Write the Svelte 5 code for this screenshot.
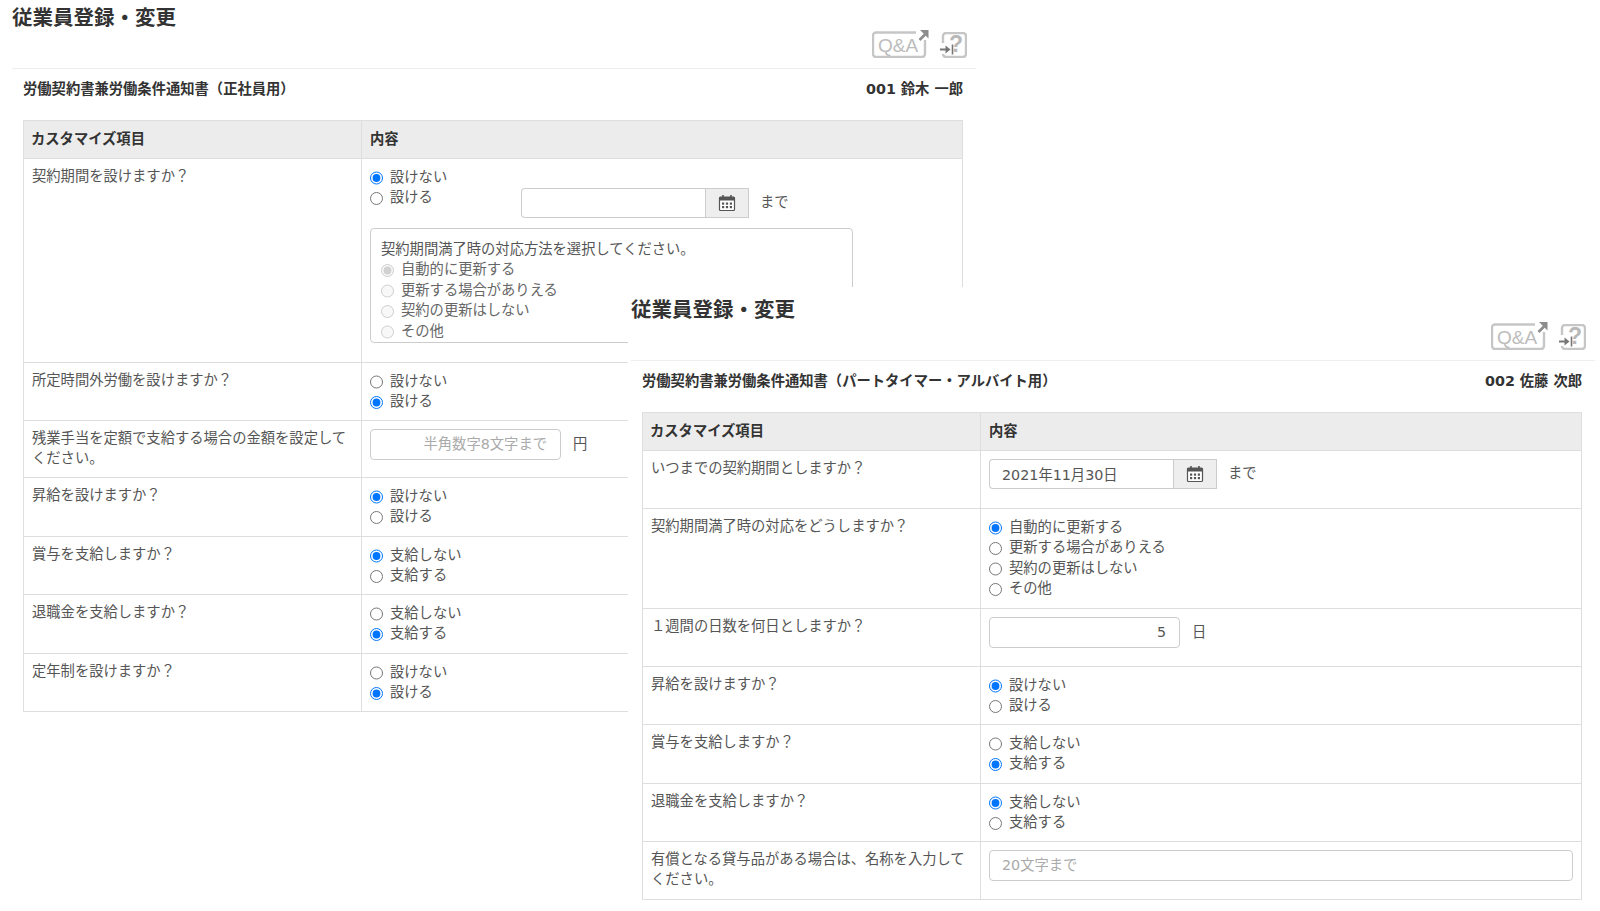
<script>
  const sheetA = {
    docTitle: "労働契約書兼労働条件通知書（正社員用）",
    person: "001 鈴木 一郎",
    rows: [
      { label: "契約期間を設けますか？", h: 204, kind: "term" },
      { label: "所定時間外労働を設けますか？", h: 58, kind: "radio", options: ["設けない", "設ける"], picked: 1 },
      { label: "残業手当を定額で支給する場合の金額を設定してください。", h: 57, kind: "number", placeholder: "半角数字8文字まで", unit: "円" },
      { label: "昇給を設けますか？", h: 59, kind: "radio", options: ["設けない", "設ける"], picked: 0 },
      { label: "賞与を支給しますか？", h: 58, kind: "radio", options: ["支給しない", "支給する"], picked: 0 },
      { label: "退職金を支給しますか？", h: 59, kind: "radio", options: ["支給しない", "支給する"], picked: 1 },
      { label: "定年制を設けますか？", h: 58, kind: "radio", options: ["設けない", "設ける"], picked: 1 }
    ]
  };

  const renewal = ["自動的に更新する", "更新する場合がありえる", "契約の更新はしない", "その他"];

  const sheetB = {
    docTitle: "労働契約書兼労働条件通知書（パートタイマー・アルバイト用）",
    person: "002 佐藤 次郎",
    rows: [
      { label: "いつまでの契約期間としますか？", h: 58, kind: "date", value: "2021年11月30日" },
      { label: "契約期間満了時の対応をどうしますか？", h: 100, kind: "radio", options: renewal, picked: 0 },
      { label: "１週間の日数を何日としますか？", h: 58, kind: "number", value: "5", unit: "日" },
      { label: "昇給を設けますか？", h: 58, kind: "radio", options: ["設けない", "設ける"], picked: 0 },
      { label: "賞与を支給しますか？", h: 59, kind: "radio", options: ["支給しない", "支給する"], picked: 1 },
      { label: "退職金を支給しますか？", h: 58, kind: "radio", options: ["支給しない", "支給する"], picked: 0 },
      { label: "有償となる貸与品がある場合は、名称を入力してください。", h: 58, kind: "text", placeholder: "20文字まで" }
    ]
  };
</script>

{#snippet radios(name, options, picked, disabled = false)}
  {#each options as opt, i}
    <label class="radio" class:off={disabled}>
      <input type="radio" {name} checked={i === picked} {disabled} />
      <span>{opt}</span>
    </label>
  {/each}
{/snippet}

{#snippet datePicker(value)}
  <div class="date">
    <input type="text" class="field date-input" {value} />
    <button class="cal" type="button" aria-label="カレンダー">
      <svg width="18" height="18" viewBox="0 0 18 18">
        <rect x="1.5" y="3" width="15" height="13.5" rx="1" fill="#fff" stroke="#555" stroke-width="1.2" />
        <rect x="1.5" y="3" width="15" height="3.5" fill="#555" />
        <path d="M5 1v3.5M13 1v3.5" stroke="#555" stroke-width="1.6" />
        <g fill="#555">
          <rect x="4" y="8.5" width="2.2" height="2.2" /><rect x="7.9" y="8.5" width="2.2" height="2.2" /><rect x="11.8" y="8.5" width="2.2" height="2.2" />
          <rect x="4" y="12" width="2.2" height="2.2" /><rect x="7.9" y="12" width="2.2" height="2.2" /><rect x="11.8" y="12" width="2.2" height="2.2" />
        </g>
      </svg>
    </button>
    <span class="until">まで</span>
  </div>
{/snippet}

{#snippet sheet(data, id)}
  <div class="head">
    <h2>従業員登録・変更</h2>
    <div class="tools">
      <svg class="qa" width="57" height="29" viewBox="0 0 57 29">
        <path d="M44 3.5H4a3 3 0 0 0-3 3V25a3 3 0 0 0 3 3h46a3 3 0 0 0 3-3V11" fill="none" stroke="#c6c6c6" stroke-width="2.4" />
        <text x="6" y="22.5" class="qa-text">Q&amp;A</text>
        <path d="M47.5 11L53 5.5" stroke="#8c8c8c" stroke-width="2.6" />
        <path d="M48 1h8.5v8.5z" fill="#8c8c8c" />
      </svg>
      <svg class="help" width="27" height="26" viewBox="0 0 27 26">
        <path d="M3 11V4a3 3 0 0 1 3-3h17a3 3 0 0 1 3 3v18a3 3 0 0 1-3 3H6a3 3 0 0 1-3-3" fill="none" stroke="#c6c6c6" stroke-width="2.4" />
        <text x="9" y="20" class="help-text">?</text>
        <path d="M0 17.5h7" stroke="#777" stroke-width="2" />
        <path d="M5.5 13.5l5 4-5 4z" fill="#777" />
        <path d="M12.5 12.5v10" stroke="#777" stroke-width="1.6" />
      </svg>
    </div>
  </div>

  <div class="doc">
    <span>{data.docTitle}</span>
    <span>{data.person}</span>
  </div>

  <table>
    <colgroup><col class="col-label" /><col /></colgroup>
    <thead>
      <tr><th>カスタマイズ項目</th><th>内容</th></tr>
    </thead>
    <tbody>
      {#each data.rows as row, r}
        <tr style="height: {row.h}px">
          <td class="q">{row.label}</td>
          <td class="a">
            {#if row.kind === "radio"}
              {@render radios(`${id}-${r}`, row.options, row.picked)}
            {:else if row.kind === "date"}
              {@render datePicker(row.value)}
            {:else if row.kind === "number"}
              <div class="with-unit">
                <input type="text" class="field num" value={row.value ?? ""} placeholder={row.placeholder ?? ""} />
                <span>{row.unit}</span>
              </div>
            {:else if row.kind === "text"}
              <input type="text" class="field wide" placeholder={row.placeholder} />
            {:else if row.kind === "term"}
              <div class="term-top">
                <div class="term-radios">
                  {@render radios(`${id}-${r}`, ["設けない", "設ける"], 0)}
                </div>
                <div class="term-date">{@render datePicker("")}</div>
              </div>
              <div class="term-box">
                <div>契約期間満了時の対応方法を選択してください。</div>
                {@render radios(`${id}-${r}-sub`, renewal, 0, true)}
              </div>
            {/if}
          </td>
        </tr>
      {/each}
    </tbody>
  </table>
{/snippet}

<div class="canvas">
  <section class="sheet first">{@render sheet(sheetA, "a")}</section>
  <section class="sheet second">{@render sheet(sheetB, "b")}</section>
</div>

<style>
  :global(body) { background: #fff; }

  .canvas { position: relative; width: 1600px; height: 911px; overflow: hidden; font-family: "DejaVu Sans", "Noto Sans CJK JP", sans-serif; font-size: 14.3px; line-height: 20.5px; color: #555; }

  .sheet { position: absolute; box-sizing: border-box; width: 967px; padding-left: 3px; background: #fff; }
  .sheet.first { left: 9px; top: -5px; }
  .sheet.second { left: 628px; top: 287px; height: 624px; }

  .head { display: flex; justify-content: space-between; height: 73px; border-bottom: 1px solid #eee; }
  h2 { margin: 8px 0 0; font-size: 20.5px; line-height: 30px; font-weight: 700; color: #333; }
  .tools { display: flex; align-items: flex-start; gap: 11px; padding: 34px 9px 0 0; }
  .help { margin-top: 3px; }
  .qa-text { font-family: "Liberation Sans", sans-serif; font-size: 19px; fill: #bcbcbc; }
  .help-text { font-family: "Liberation Sans", sans-serif; font-size: 23px; font-weight: 700; fill: #b8b8b8; }

  .doc { display: flex; justify-content: space-between; box-sizing: border-box; width: 940px; height: 51px; margin-left: 11px; padding-top: 9.5px; font-weight: 700; line-height: 20px; color: #333; }

  table { width: 940px; margin-left: 11px; border-collapse: collapse; table-layout: fixed; }
  .col-label { width: 338px; }
  th, td { border: 1px solid #dedede; text-align: left; vertical-align: top; box-sizing: border-box; }
  th { height: 38px; padding: 0 8px; background: #ececec; font-weight: 700; color: #333; vertical-align: middle; }
  th:first-child { padding-left: 7px; }
  .q { padding: 7px 8px 8px 8px; line-height: 20px; }
  .a { padding: 8px; }

  .radio { display: flex; align-items: center; height: 20.5px; white-space: nowrap; }
  .radio input { width: 13.5px; height: 13.5px; margin: 1px 7px 0 -0.5px; flex: none; accent-color: #0075ff; }
  .radio span { margin-top: -1px; }
  .radio.off { color: #666; }

  .field { box-sizing: border-box; height: 31px; border: 1px solid #ccc; border-radius: 4px; padding: 0 13px 2px 12px; background: #fff; font: inherit; color: #555; }
  .field::placeholder { color: #aaa; opacity: 1; }
  .wide { width: 100%; }
  .num { width: 191px; text-align: right; }
  .with-unit { display: flex; align-items: center; gap: 12px; }
  .with-unit span { margin-top: -1px; }

  .date { display: flex; align-items: center; }
  .date-input { width: 184px; height: 30px; border-radius: 4px 0 0 4px; border-right: none; }
  .cal { display: flex; align-items: center; justify-content: center; box-sizing: border-box; width: 44px; height: 30px; padding: 0; border: 1px solid #ccc; background: #eee; }
  .until { margin-left: 11px; margin-top: -1px; }

  .term-top { display: flex; }
  .term-radios { width: 151px; }
  .term-date { margin-top: 21px; }
  .term-box { box-sizing: border-box; width: 483px; height: 115px; margin-top: 10px; padding: 10px 10px; border: 1px solid #ccc; border-radius: 4px; }
</style>
